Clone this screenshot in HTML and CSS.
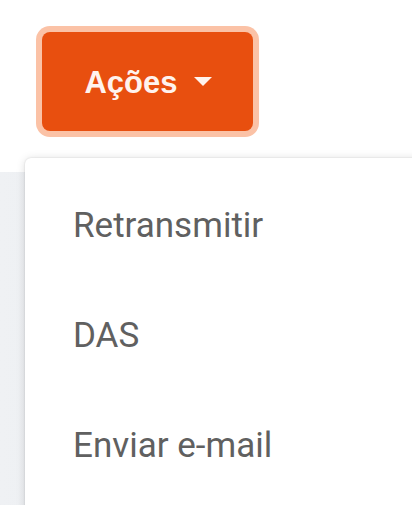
FILE: index.html
```html
<!DOCTYPE html>
<html lang="pt-BR">
<head>
<meta charset="utf-8">
<title>Ações</title>
<link rel="stylesheet" href="styles.css">
</head>
<body>
<div class="page">
  <header class="topbar">
    <button class="btn-actions" type="button">
      <span class="btn-label">Ações</span>
      <span class="caret"></span>
    </button>
  </header>
  <main class="content">
    <ul class="dropdown">
      <li class="dropdown-item">Retransmitir</li>
      <li class="dropdown-item">DAS</li>
      <li class="dropdown-item">Enviar e-mail</li>
    </ul>
  </main>
</div>
</body>
</html>
```

FILE: styles.css
```css
html, body {
  margin: 0;
  padding: 0;
  background: #ffffff;
}

.page {
  position: relative;
  width: 412px;
  height: 505px;
  overflow: hidden;
  display: flex;
  flex-direction: column;
}

.topbar {
  height: 172px;
  flex: none;
  background: #ffffff;
  padding: 32px 0 0 42px;
  box-sizing: border-box;
}

.btn-actions {
  width: 211px;
  height: 99px;
  border: none;
  border-radius: 8px;
  background: #e84f0f;
  box-shadow: 0 0 0 6px #fbc2a6;
  display: flex;
  align-items: center;
  justify-content: center;
  gap: 16px;
  padding: 0 0 0 1px;
  color: #fff3ee;
  font-family: "Liberation Sans", Arial, sans-serif;
  font-weight: bold;
  font-size: 31px;
  cursor: pointer;
}

.btn-label {
  line-height: 1;
  position: relative;
  top: 1px;
}

.caret {
  width: 0;
  height: 0;
  border-left: 9px solid transparent;
  border-right: 9px solid transparent;
  border-top: 9px solid #fff3ee;
}

.content {
  flex: 1;
  position: relative;
  background: linear-gradient(90deg, #eff1f4 0%, #e9ebee 70%, #e2e4e7 100%);
}

.dropdown {
  position: absolute;
  left: 25px;
  top: -14px;
  width: 420px;
  margin: 0;
  padding: 13px 0 40px;
  list-style: none;
  background: #ffffff;
  border-radius: 6px;
  box-shadow: 0 1px 10px rgba(0, 0, 0, 0.14), 0 0 2px rgba(0, 0, 0, 0.14);
}

.dropdown-item {
  padding: 37px 0 38px 48px;
  font-family: Roboto, "Liberation Sans", Arial, sans-serif;
  font-size: 35px;
  line-height: 35px;
  color: #606060;
}
```
